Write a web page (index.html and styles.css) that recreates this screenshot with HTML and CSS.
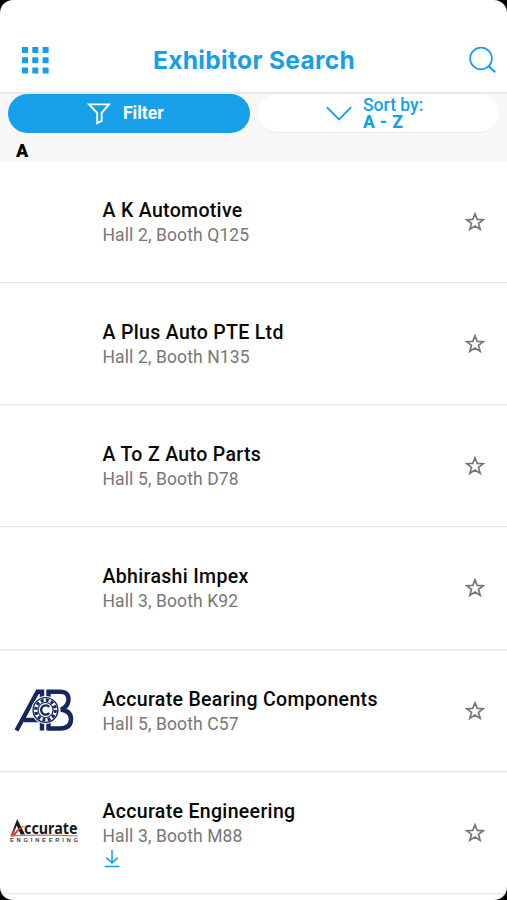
FILE: index.html
```html
<!DOCTYPE html>
<html lang="en">
<head>
<meta charset="utf-8">
<title>Exhibitor Search</title>
<link rel="stylesheet" href="styles.css">
</head>
<body>
<svg class="defs" width="0" height="0" aria-hidden="true">
  <symbol id="star" viewBox="0 0 20 20"><path d="M10 1.8 12.2 7.4 18.3 7.7 13.5 11.4 15.2 17.4 10 14 4.8 17.4 6.5 11.4 1.7 7.7 7.8 7.4Z" fill="none" stroke="#777" stroke-width="1.7"/></symbol>
</svg>
<main class="screen">
  <header class="header">
    <svg class="grid-icon" viewBox="0 0 27 27" fill="#169ee8"><path d="M0 0h6v6H0zM10.3 0h6v6h-6zM20.6 0h6v6h-6zM0 10.3h6v6H0zM10.3 10.3h6v6h-6zM20.6 10.3h6v6h-6zM0 20.6h6v6H0zM10.3 20.6h6v6h-6zM20.6 20.6h6v6h-6z"/></svg>
    <h1 class="title">Exhibitor Search</h1>
    <svg class="search-icon" viewBox="0 0 28 28" fill="none" stroke="#169ee8" stroke-width="1.7"><circle cx="12" cy="12.5" r="10.9"/><path d="M19.5 20 26.2 26.3" stroke-width="2"/></svg>
  </header>
  <section class="tools">
    <div class="buttons">
      <div class="pill filter">
        <svg class="funnel" viewBox="0 0 24 22" fill="none" stroke="#fff" stroke-width="1.9"><path d="M2 1.4H22L14.7 9.8V18L10.2 20.2V9.8Z"/></svg>
        <span>Filter</span>
      </div>
      <div class="pill sort">
        <svg class="chevron" viewBox="0 0 26 16" fill="none" stroke="#169ee8" stroke-width="1.9"><path d="M.8 1.2 13 13.5 25.2 1.2"/></svg>
        <div class="sort-text"><div>Sort by:</div><div class="order">A - Z</div></div>
      </div>
    </div>
    <h2 class="letter">A</h2>
  </section>
  <ul class="list">
    <li class="row"><div class="logo"></div><div class="info"><h3 class="name">A K Automotive</h3><p class="place">Hall 2, Booth Q125</p></div><svg class="star"><use href="#star"/></svg></li>
    <li class="row"><div class="logo"></div><div class="info"><h3 class="name">A Plus Auto PTE Ltd</h3><p class="place">Hall 2, Booth N135</p></div><svg class="star"><use href="#star"/></svg></li>
    <li class="row"><div class="logo"></div><div class="info"><h3 class="name">A To Z Auto Parts</h3><p class="place">Hall 5, Booth D78</p></div><svg class="star"><use href="#star"/></svg></li>
    <li class="row"><div class="logo"></div><div class="info"><h3 class="name">Abhirashi Impex</h3><p class="place">Hall 3, Booth K92</p></div><svg class="star"><use href="#star"/></svg></li>
    <li class="row">
      <div class="logo">
        <svg width="88" height="50" viewBox="0 0 88 50">
          <g fill="none" stroke="#17265c" stroke-width="4.4"><path d="M16.5 45.5 37.5 6.8H42V45.5M24 35H40"/><path d="M48.5 45.5V6.8H60Q69 6.8 68.5 15 68 22 61 24.5 71 26 71 34 71 43.5 60 43.5H48"/></g>
          <circle cx="45.5" cy="25" r="14" fill="#fff"/>
          <circle cx="45.5" cy="25" r="12.4" fill="none" stroke="#17265c" stroke-width="1.4"/>
          <circle cx="45.5" cy="25" r="9.8" fill="none" stroke="#17265c" stroke-width="3.2" stroke-dasharray="2.9 2.23"/>
          <circle cx="45.5" cy="25" r="7.5" fill="none" stroke="#17265c" stroke-width="1.2"/>
          <path d="M49.2 22A4.6 4.6 0 1 0 49.2 28" fill="none" stroke="#17265c" stroke-width="2.3"/>
        </svg>
      </div>
      <div class="info"><h3 class="name">Accurate Bearing Components</h3><p class="place">Hall 5, Booth C57</p></div><svg class="star"><use href="#star"/></svg>
    </li>
    <li class="row">
      <div class="logo">
        <svg class="accurate" width="88" height="30" viewBox="0 0 88 30">
          <path d="M11 19 17.2 3 25 18.5H20.6L16.8 9.5 13 19Z" fill="#191919"/>
          <path d="M10 20.5 15.5 11 14.2 17Q20 10 26 9.5 19 13 14.5 20.5Z" fill="#cf4a3c"/>
          <text x="24" y="17.8" textLength="53.5" lengthAdjust="spacingAndGlyphs" class="accurate-name">ccurate</text>
          <path d="M13 19.6Q40 18.6 78 20" fill="none" stroke="#dd6b55" stroke-width="1.2"/>
          <text x="10" y="25.6" textLength="68" class="accurate-sub">ENGINEERING</text>
        </svg>
      </div>
      <div class="info"><h3 class="name">Accurate Engineering</h3><p class="place">Hall 3, Booth M88</p>
        <svg class="download" viewBox="0 0 16 18" fill="none" stroke="#169ee8" stroke-width="1.5"><path d="M8 0V12.5M2.4 7.6 8 13 13.6 7.6M.5 16.6H15.5"/></svg></div><svg class="star"><use href="#star"/></svg>
    </li>
  </ul>
</main>
</body>
</html>
```

FILE: styles.css
```css
* { box-sizing: border-box; margin: 0; padding: 0; }
body { background: #000; font-family: Roboto, sans-serif; }
.defs { display: block; }
.screen { width: 507px; height: 900px; overflow: hidden; border-radius: 13px; background: #fff; }
.header { height: 94px; padding: 27px 10px 0 22px; display: flex; align-items: center; border-bottom: 2px solid #e9e9e9; }
.grid-icon { width: 27px; height: 27px; flex: none; margin-top: 1px; }
.title { flex: 1; text-align: center; font-family: Inter, sans-serif; font-size: 24.5px; line-height: 30px; font-weight: 700; letter-spacing: .33px; color: #169ee8; margin-right: 10px; white-space: nowrap; }
.search-icon { width: 28px; height: 28px; flex: none; margin-top: 1px; }
.tools { height: 67px; background: #f8f8f8; }
.buttons { display: flex; gap: 8px; padding: 0 8px; height: 39px; }
.pill { height: 39px; border-radius: 20px; display: flex; align-items: center; }
.filter { width: 242px; background: #189fe9; color: #fff; font-size: 17.5px; font-weight: 700; padding-left: 79px; gap: 12px; }
.filter span { margin-top: -1px; }
.funnel { width: 24px; height: 22px; margin-top: 1px; }
.sort { width: 241px; background: #fff; color: #169ee8; padding-left: 68px; gap: 11px; border-bottom: 1px solid #eee; }
.chevron { width: 26px; height: 16px; margin-top: 2px; }
.sort-text { font-size: 17.5px; line-height: 17px; font-weight: 500; margin-top: 2px; }
.order { font-weight: 800; letter-spacing: .3px; }
.letter { font-size: 18px; line-height: 22px; font-weight: 900; padding: 7px 0 0 16px; }
.list { list-style: none; }
.row { height: 122.2px; display: flex; align-items: center; border-bottom: 1px solid #e7e7e7; box-shadow: 0 1px 0 #f6f6f6; }
.row:first-child { height: 122px; }
.logo { width: 88px; flex: none; }
.logo svg { display: block; }
.info { flex: 1; padding: 3px 0 0 14.5px; }
.name { font-size: 19.5px; line-height: 24px; font-weight: 500; letter-spacing: .33px; color: #080808; white-space: nowrap; }
.place { font-size: 17.5px; line-height: 24px; letter-spacing: .12px; color: #777; }
.star { width: 20px; height: 20px; margin: 1px 22px 0 0; flex: none; }
.download { display: block; width: 16px; height: 18px; margin: 2px 0 0 1.5px; }
.accurate { margin-top: -3px; }
.accurate-name { font: 700 15.5px "Noto Sans", sans-serif; fill: #191919; }
.accurate-sub { font: 700 5.8px "Liberation Sans", sans-serif; fill: #444; }
```
